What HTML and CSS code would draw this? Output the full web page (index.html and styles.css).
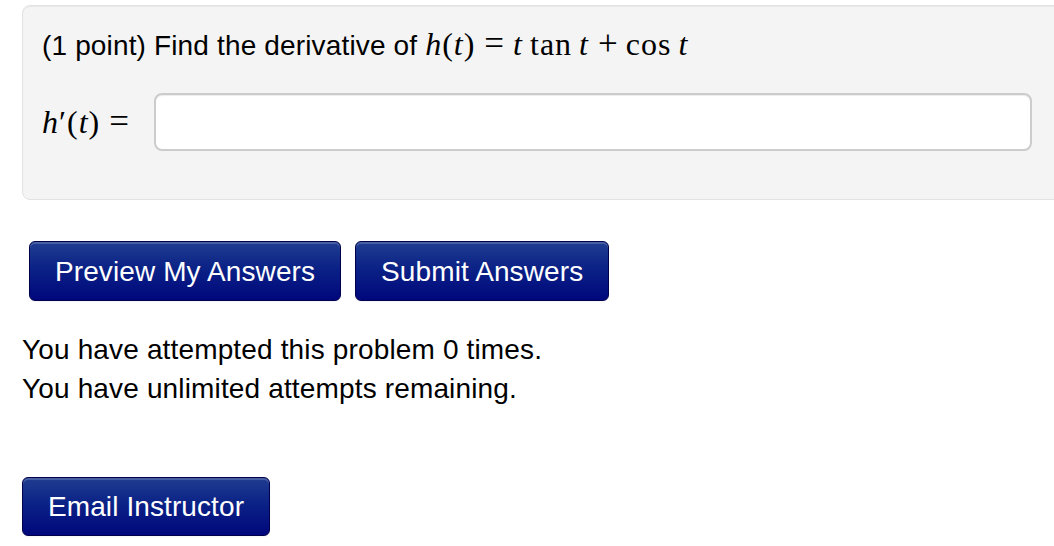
FILE: index.html
```html
<!DOCTYPE html>
<html>
<head>
<meta charset="utf-8">
<link rel="stylesheet" href="styles.css">
</head>
<body>
<div class="page">
  <div class="problem">
    <p class="question">(1 point) Find the derivative of <span class="math"><i>h</i>(<i>t</i>)<span class="op rel">=</span><i>t</i><span class="sp"></span>tan<span class="sp"></span><i>t</i><span class="op bin">+</span>cos<span class="sp"></span><i>t</i></span></p>
    <div class="answer-row">
      <span class="math lhs"><i>h</i>′(<i>t</i>)<span class="op rel">=</span></span>
      <input class="answer" type="text">
    </div>
  </div>
  <div class="actions">
    <button class="btn">Preview My Answers</button>
    <button class="btn">Submit Answers</button>
  </div>
  <div class="attempts">
    <p>You have attempted this problem 0 times.</p>
    <p>You have unlimited attempts remaining.</p>
  </div>
  <div class="email">
    <button class="btn btn-email">Email Instructor</button>
  </div>
</div>
</body>
</html>
```
FILE: styles.css
```css
html, body {
  margin: 0;
  padding: 0;
  background: #ffffff;
  overflow: hidden;
}
.page {
  font-family: "Liberation Sans", Arial, Helvetica, sans-serif;
  font-size: 28px;
  letter-spacing: 0.15px;
  line-height: 39px;
  color: #000;
  width: 1054px;
  height: 546px;
}
.problem {
  margin: 5px -20px 0 22px;
  height: 195px;
  box-sizing: border-box;
  background: #f4f4f4;
  border: 1px solid #e3e3e3;
  border-radius: 8px;
  padding: 19px 0 0 19px;
  box-shadow: inset 0 1px 1px rgba(0,0,0,0.05);
}
.question {
  margin: 0;
  height: 39px;
  margin-bottom: 1px;
}
.math {
  font-family: "Liberation Serif", "Times New Roman", serif;
  font-size: 32px;
  letter-spacing: 1px;
}
.math i {
  font-style: italic;
}
.op {
  font-size: 35px;
  letter-spacing: 0;
  line-height: 0;
}
.rel {
  margin: 0 9px 0 9px;
}
.bin {
  margin: 0 8px 0 9px;
}
.sp {
  display: inline-block;
  width: 7px;
}
.answer-row {
  display: flex;
  align-items: center;
  margin-top: 29px;
}
.lhs {
  width: 112px;
  flex: none;
}
.answer {
  width: 878px;
  height: 58px;
  flex: none;
  box-sizing: border-box;
  border: 2px solid #cccccc;
  border-radius: 8px;
  background: #fff;
  font-size: 27px;
  padding: 4px 12px;
  box-shadow: inset 0 1px 1px rgba(0,0,0,0.075);
}
.actions {
  display: flex;
  gap: 14px;
  margin: 41px 0 0 29px;
}
.btn {
  font-family: "Liberation Sans", Arial, Helvetica, sans-serif;
  font-size: 28px;
  letter-spacing: 0.1px;
  line-height: 39px;
  color: #ffffff;
  height: 60px;
  padding: 0 25px;
  border: 1px solid #00004d;
  border-radius: 6px;
  background: linear-gradient(to bottom, #1f3d90 0%, #0b2286 45%, #00077c 100%);
  box-shadow: inset 0 2px 0 rgba(255,255,255,0.18), 0 1px 2px rgba(0,0,0,0.05);
  cursor: pointer;
}
.attempts {
  margin: 29px 0 0 22px;
}
.attempts p {
  margin: 0;
}
.email {
  margin: 69px 0 0 22px;
}
.btn-email {
  height: 59px;
}
```
